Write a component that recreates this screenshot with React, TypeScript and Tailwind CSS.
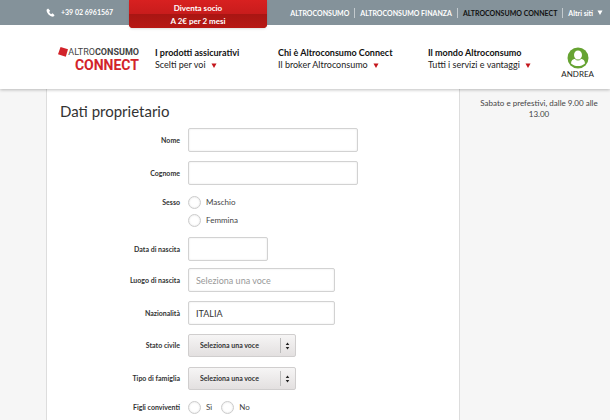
import type { ReactNode } from 'react'

const siteLinks = [
    { label: 'ALTROCONSUMO', active: false },
    { label: 'ALTROCONSUMO FINANZA', active: false },
    { label: 'ALTROCONSUMO CONNECT', active: true },
]

const menu = [
    { title: 'I prodotti assicurativi', text: 'Scelti per voi' },
    { title: 'Chi è Altroconsumo Connect', text: 'Il broker Altroconsumo' },
    { title: 'Il mondo Altroconsumo', text: 'Tutti i servizi e vantaggi' },
]

const inputClass =
    'block h-6 rounded-xs border border-[#d2d2d2] bg-white px-[7px] text-[9px] text-[#333] shadow-[inset_0_0_2px_#e4e4e4] placeholder:text-[#999] outline-none'

const labelClass = 'w-[120px] shrink-0 text-right text-[7px] leading-[13px] font-bold text-[#333]'

function Triangle({ className }: { className: string }) {
    return (
        <svg viewBox="0 0 6 5" className={className} aria-hidden="true">
            <path d="M0.5 0.5h5L3 5z" fill="currentColor" />
        </svg>
    )
}

function Row({ label, id, className, children }: { label: string; id: string; className: string; children: ReactNode }) {
    return (
        <div className={`flex items-center gap-2 ${className}`}>
            <label htmlFor={id} className={labelClass}>
                {label}
            </label>
            {children}
        </div>
    )
}

function Radio({ id, name, label }: { id: string; name: string; label: string }) {
    return (
        <div className="flex items-center gap-[5px]">
            <input
                id={id}
                type="radio"
                name={name}
                className="size-[13px] appearance-none rounded-full border border-[#ccc] bg-white shadow-[inset_0_0_2px_#ddd] checked:bg-[#888]"
            />
            <label htmlFor={id} className="text-[8px] leading-[13px] text-[#444]">{label}</label>
        </div>
    )
}

function SelectBox({ id }: { id: string }) {
    return (
        <div className="relative w-[108px]">
            <select
                id={id}
                className="block h-[23px] w-full appearance-none rounded-xs border border-[#d0cece] bg-linear-to-b from-[#f6f5f5] to-[#e3e0e0] pr-5 pl-[11px] text-[7px] font-bold text-[#333] outline-none"
            >
                <option>Seleziona una voce</option>
            </select>
            <div className="pointer-events-none absolute inset-y-1 right-[6px] flex items-center gap-1 border-l border-[#bbb] pl-1">
                <svg viewBox="0 0 5 8" className="h-2 w-[5px] text-[#222]" aria-hidden="true">
                    <path d="M0.7 3h3.6L2.5 0.5zM0.7 5h3.6L2.5 7.5z" fill="currentColor" />
                </svg>
            </div>
        </div>
    )
}

export default function App() {
    return (
        <div className="min-h-screen flex flex-col bg-[#f6f6f6] font-['Lato',sans-serif] text-[#333]">
            {/* Top bar */}
            <div className="relative z-20 flex h-[25px] items-center justify-between bg-[#84929a] pr-[7px] pl-[46px] text-[7px] font-bold text-white">
                <a href="#" className="flex items-center gap-[6px]">
                    <svg viewBox="0 0 24 24" className="size-[9px]" aria-hidden="true">
                        <path
                            d="M5.5 1.5L1.5 4.5C1 13 10 23 19 23l4-4-5.5-5-4 2.5c-2-1-4-3.5-5-6L11 7z"
                            fill="currentColor"
                        />
                    </svg>
                    +39 02 6961567
                </a>
                <a
                    href="#"
                    className="absolute top-0 left-[129px] w-[138px] overflow-hidden rounded-b-sm bg-[#a81410] text-center text-[8px] shadow-sm"
                >
                    <span className="block h-[14px] bg-linear-to-b from-[#d82020] to-[#c81c1c] pt-[2px] leading-3">Diventa socio</span>
                    <span className="block h-[14px] bg-linear-to-b from-[#a81613] to-[#b81814] pt-px leading-3">A 2€ per 2 mesi</span>
                </a>
                <div className="flex items-center">
                    {siteLinks.map((link) => (
                        <a
                            key={link.label}
                            href="#"
                            className={`mr-[5px] border-r border-[#c3cace] pr-[5px] leading-[10px] ${link.active ? 'text-[#111]' : 'text-white'}`}
                        >
                            {link.label}
                        </a>
                    ))}
                    <button type="button" className="flex items-center gap-1 leading-[10px]">
                        Altri siti <Triangle className="h-[5px] w-[6px]" />
                    </button>
                </div>
            </div>

            {/* Header */}
            <header className="relative z-10 flex h-16 items-center gap-4 bg-white pt-1 pr-4 pl-[58px] shadow-[0_1px_3px_rgba(0,0,0,0.25)]">
                <a href="#" className="w-[81px] shrink-0 text-right font-['Roboto',sans-serif]">
                    <span className="flex items-center justify-end text-[9px] leading-3 text-[#444]">
                        <svg viewBox="0 0 11 11" className="size-[10px] shrink-0" aria-hidden="true">
                            <path d="M2.8 0L11 2.4 8.6 10.6 0 8z" fill="#d2232a" />
                        </svg>
                        <span>ALTRO</span>
                        <span className="font-bold">CONSUMO</span>
                    </span>
                    <span className="block text-[14px] leading-[15px] font-bold text-[#d2232a]">CONNECT</span>
                </a>
                <nav className="grid grid-cols-[123px_150px_auto] text-[9px] leading-3 whitespace-nowrap text-[#222]">
                    {menu.map((item) => (
                        <a key={item.title} href="#">
                            <span className="block font-bold text-[#111]">{item.title}</span>
                            <span className="flex items-center gap-[5px]">
                                {item.text} <Triangle className="h-[5px] w-[6px] text-[#c4161c]" />
                            </span>
                        </a>
                    ))}
                </nav>
                <a href="#" className="ml-auto flex flex-col items-center pt-2 text-[8px] leading-[10px] text-[#222]">
                    <svg viewBox="0 0 22 22" className="size-[22px]" aria-hidden="true">
                        <circle cx="11" cy="11" r="10.5" fill="#66a332" />
                        <ellipse cx="11" cy="8" rx="4" ry="4.5" fill="#fff" />
                        <path d="M4 16.500c0-3 2-4.600 4.200-4.800 1.700 1.400 3.900 1.400 5.600 0C16 11.900 18 13.500 18 16.500c-3.700 3.400-10.300 3.400-14 0z" fill="#fff" />
                        <path d="M7.400 11.200c1.900 2.600 5.300 2.600 7.200 0" fill="none" stroke="#66a332" strokeWidth="0.700" />
                    </svg>
                    ANDREA
                </a>
            </header>

            <div className="flex flex-1">
                <main className="ml-[46px] flex-1 border-x border-[#ddd] bg-white px-[13px] pt-3">
                    <h1 className="text-[15px] leading-5">Dati proprietario</h1>
                    <form className="pt-[7px]">
                        <Row label="Nome" id="nome" className="mb-[9px]">
                            <input id="nome" type="text" className={`${inputClass} w-[170px]`} />
                        </Row>
                        <Row label="Cognome" id="cognome" className="mb-[11px]">
                            <input id="cognome" type="text" className={`${inputClass} w-[170px]`} />
                        </Row>
                        <div role="radiogroup" aria-labelledby="sesso" className="mb-[10px] flex gap-2">
                            <span id="sesso" className={labelClass}>Sesso</span>
                            <div className="flex flex-col gap-[5px]">
                                <Radio id="maschio" name="sesso" label="Maschio" />
                                <Radio id="femmina" name="sesso" label="Femmina" />
                            </div>
                        </div>
                        <Row label="Data di nascita" id="data" className="mb-[7px]">
                            <input id="data" type="text" className={`${inputClass} w-20`} />
                        </Row>
                        <Row label="Luogo di nascita" id="luogo" className="mb-[9px]">
                            <input id="luogo" type="text" placeholder="Seleziona una voce" className={`${inputClass} w-[147px]`} />
                        </Row>
                        <Row label="Nazionalità" id="nazionalita" className="mb-[9px]">
                            <input id="nazionalita" type="text" defaultValue="ITALIA" className={`${inputClass} w-[147px]`} />
                        </Row>
                        <Row label="Stato civile" id="stato" className="mb-[10px]">
                            <SelectBox id="stato" />
                        </Row>
                        <Row label="Tipo di famiglia" id="famiglia" className="mb-[11px]">
                            <SelectBox id="famiglia" />
                        </Row>
                        <div role="radiogroup" aria-labelledby="figli" className="flex gap-2">
                            <span id="figli" className={labelClass}>Figli conviventi</span>
                            <div className="flex gap-[9px]">
                                <Radio id="figli-si" name="figli" label="Sì" />
                                <Radio id="figli-no" name="figli" label="No" />
                            </div>
                        </div>
                    </form>
                </main>
                <aside className="w-[150px] shrink-0 pt-[9px] pr-3 pl-5 text-center text-[8px] leading-[11px] text-[#444]">
                    Sabato e prefestivi, dalle 9.00 alle 13.00
                </aside>
            </div>
        </div>
    )
}
